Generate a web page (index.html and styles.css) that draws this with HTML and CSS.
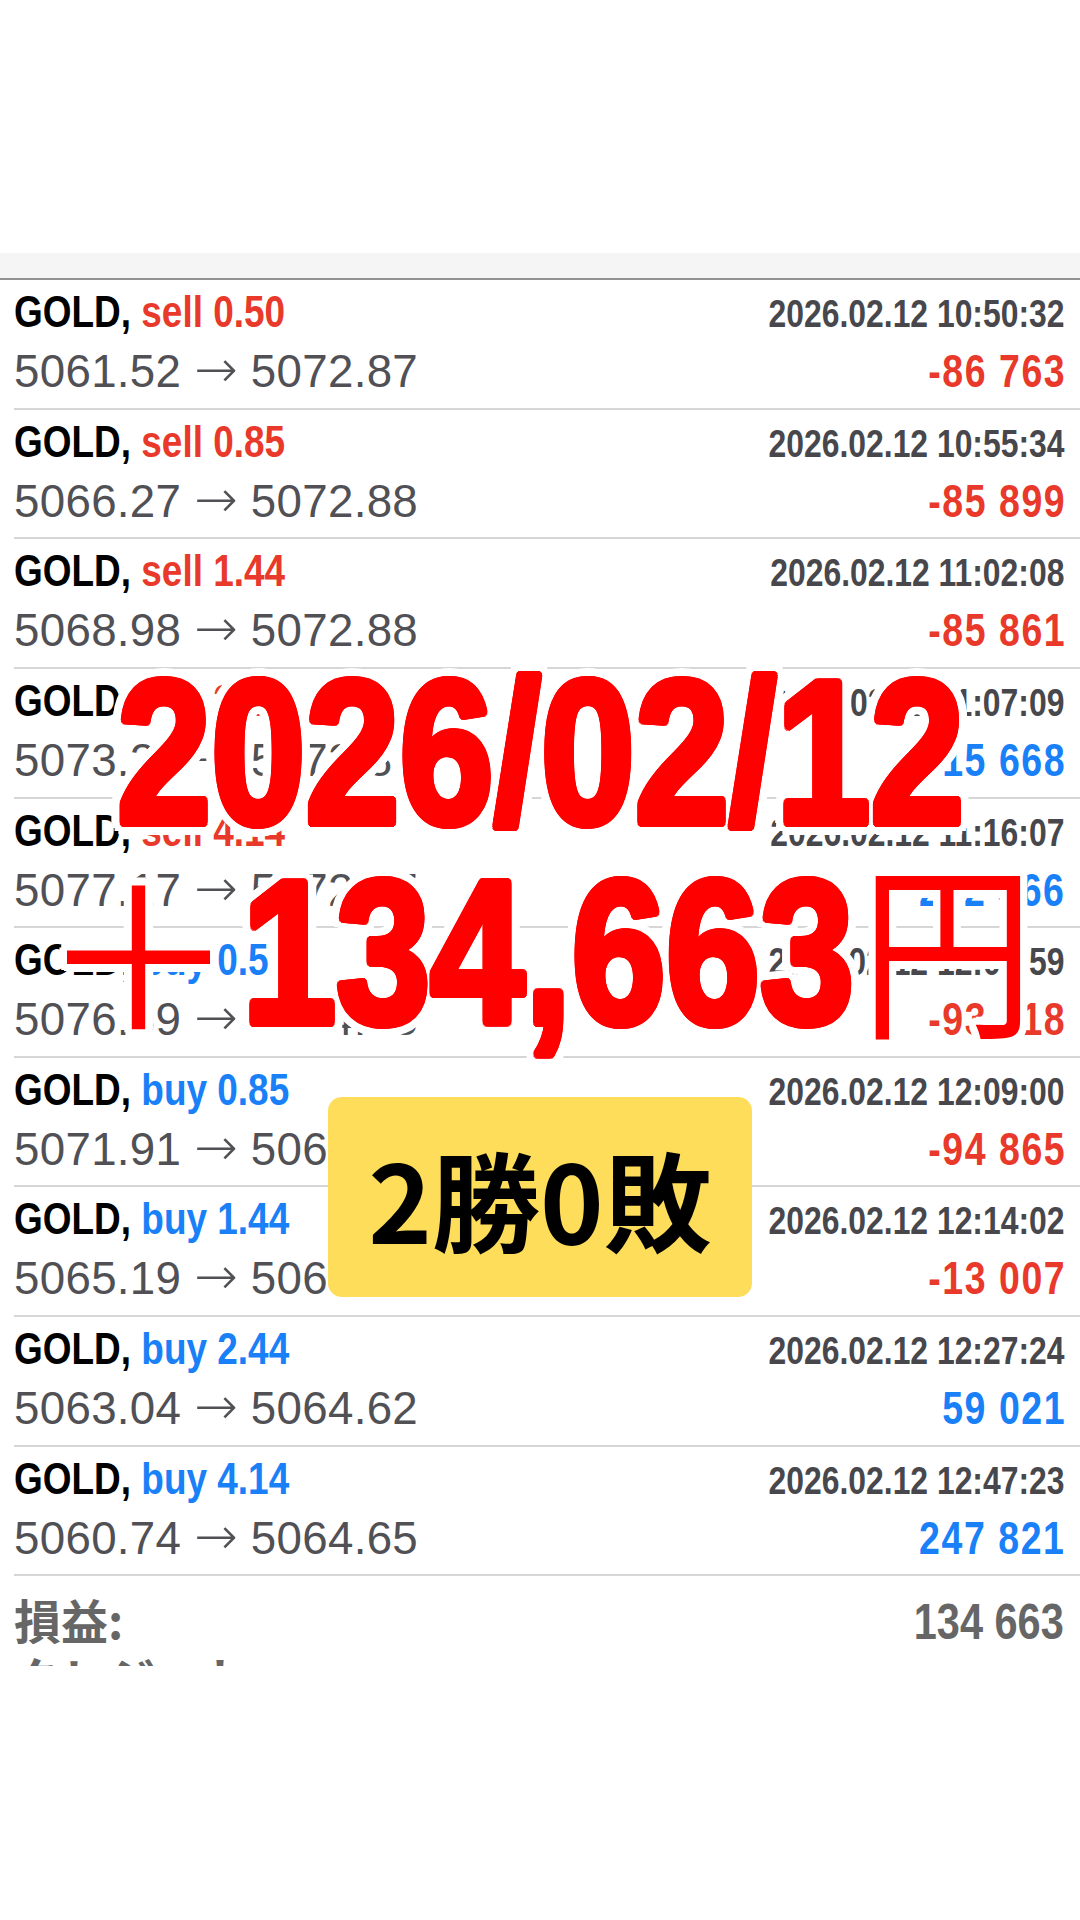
FILE: index.html
```html
<!DOCTYPE html>
<html lang="ja">
<head>
<meta charset="utf-8">
<title>GOLD 履歴</title>
<link rel="stylesheet" href="styles.css">
</head>
<body>
<div class="page">
  <div class="screen">
    <div class="gap"></div>
    <div class="band"></div>
    <ul class="deals">
      <li class="deal">
        <div class="l1"><span class="sym cond sx">GOLD, <span class="sell">sell 0.50</span></span><span class="time cond sx sx-r">2026.02.12 10:50:32</span></div>
        <div class="l2"><span class="px">5061.52 <span class="arr">→</span> 5072.87</span><span class="pl cond sx sx-r loss">-86 763</span></div>
      </li>
      <li class="deal">
        <div class="l1"><span class="sym cond sx">GOLD, <span class="sell">sell 0.85</span></span><span class="time cond sx sx-r">2026.02.12 10:55:34</span></div>
        <div class="l2"><span class="px">5066.27 <span class="arr">→</span> 5072.88</span><span class="pl cond sx sx-r loss">-85 899</span></div>
      </li>
      <li class="deal">
        <div class="l1"><span class="sym cond sx">GOLD, <span class="sell">sell 1.44</span></span><span class="time cond sx sx-r">2026.02.12 11:02:08</span></div>
        <div class="l2"><span class="px">5068.98 <span class="arr">→</span> 5072.88</span><span class="pl cond sx sx-r loss">-85 861</span></div>
      </li>
      <li class="deal">
        <div class="l1"><span class="sym cond sx">GOLD, <span class="sell">sell 2.44</span></span><span class="time cond sx sx-r">2026.02.12 11:07:09</span></div>
        <div class="l2"><span class="px">5073.29 <span class="arr">→</span> 5072.87</span><span class="pl cond sx sx-r gain">15 668</span></div>
      </li>
      <li class="deal">
        <div class="l1"><span class="sym cond sx">GOLD, <span class="sell">sell 4.14</span></span><span class="time cond sx sx-r">2026.02.12 11:16:07</span></div>
        <div class="l2"><span class="px">5077.17 <span class="arr">→</span> 5072.87</span><span class="pl cond sx sx-r gain">272 466</span></div>
      </li>
      <li class="deal">
        <div class="l1"><span class="sym cond sx">GOLD, <span class="buy">buy 0.50</span></span><span class="time cond sx sx-r">2026.02.12 12:03:59</span></div>
        <div class="l2"><span class="px">5076.39 <span class="arr">→</span> 5064.08</span><span class="pl cond sx sx-r loss">-93 918</span></div>
      </li>
      <li class="deal">
        <div class="l1"><span class="sym cond sx">GOLD, <span class="buy">buy 0.85</span></span><span class="time cond sx sx-r">2026.02.12 12:09:00</span></div>
        <div class="l2"><span class="px">5071.91 <span class="arr">→</span> 5064.61</span><span class="pl cond sx sx-r loss">-94 865</span></div>
      </li>
      <li class="deal">
        <div class="l1"><span class="sym cond sx">GOLD, <span class="buy">buy 1.44</span></span><span class="time cond sx sx-r">2026.02.12 12:14:02</span></div>
        <div class="l2"><span class="px">5065.19 <span class="arr">→</span> 5064.60</span><span class="pl cond sx sx-r loss">-13 007</span></div>
      </li>
      <li class="deal">
        <div class="l1"><span class="sym cond sx">GOLD, <span class="buy">buy 2.44</span></span><span class="time cond sx sx-r">2026.02.12 12:27:24</span></div>
        <div class="l2"><span class="px">5063.04 <span class="arr">→</span> 5064.62</span><span class="pl cond sx sx-r gain">59 021</span></div>
      </li>
      <li class="deal">
        <div class="l1"><span class="sym cond sx">GOLD, <span class="buy">buy 4.14</span></span><span class="time cond sx sx-r">2026.02.12 12:47:23</span></div>
        <div class="l2"><span class="px">5060.74 <span class="arr">→</span> 5064.65</span><span class="pl cond sx sx-r gain">247 821</span></div>
      </li>
    </ul>
    <div class="summary">
      <div class="sum-row"><span class="sum-label">損益:</span><span class="sum-val cond sx sx-r">134 663</span></div>
      <div class="sum-row next"><span class="sum-label">クレジット:</span></div>
    </div>
  </div>

  <div class="date-big cond"><span class="big-num date-num">2026/02/12</span></div>
  <div class="amount-big cond"><span class="cjk plus">＋</span><span class="big-num amt-num">134,663</span><span class="cjk yen">円</span></div>
  <div class="badge">2勝0敗</div>
</div>
</body>
</html>
```

FILE: styles.css
```css
:root {
  --red-ring: 4px 0 0 #f00, 3.7px 1.53px 0 #f00, 2.83px 2.83px 0 #f00, 1.53px 3.7px 0 #f00,
    0 4px 0 #f00, -1.53px 3.7px 0 #f00, -2.83px 2.83px 0 #f00, -3.7px 1.53px 0 #f00,
    -4px 0 0 #f00, -3.7px -1.53px 0 #f00, -2.83px -2.83px 0 #f00, -1.53px -3.7px 0 #f00,
    0 -4px 0 #f00, 1.53px -3.7px 0 #f00, 2.83px -2.83px 0 #f00, 3.7px -1.53px 0 #f00,
    2px 0 0 #f00, 0 2px 0 #f00, -2px 0 0 #f00, 0 -2px 0 #f00;
  --white-ring: 9px 0 0 #fff, 8.3px 3.06px 0 #fff, 6.4px 5.66px 0 #fff, 3.5px 7.39px 0 #fff,
    0 8px 0 #fff, -3.5px 7.39px 0 #fff, -6.4px 5.66px 0 #fff, -8.3px 3.06px 0 #fff,
    -9px 0 0 #fff, -8.3px -3.06px 0 #fff, -6.4px -5.66px 0 #fff, -3.5px -7.39px 0 #fff,
    0 -8px 0 #fff, 3.5px -7.39px 0 #fff, 6.4px -5.66px 0 #fff, 8.3px -3.06px 0 #fff,
    14px 0 0 #fff, 13px 4.59px 0 #fff, 10px 8.49px 0 #fff, 5.4px 11.09px 0 #fff,
    0 12px 0 #fff, -5.4px 11.09px 0 #fff, -10px 8.49px 0 #fff, -13px 4.59px 0 #fff,
    -14px 0 0 #fff, -13px -4.59px 0 #fff, -10px -8.49px 0 #fff, -5.4px -11.09px 0 #fff,
    0 -12px 0 #fff, 5.4px -11.09px 0 #fff, 10px -8.49px 0 #fff, 13px -4.59px 0 #fff;
  --white-thin: 4px 0 0 #fff, 2.83px 2.83px 0 #fff, 0 4px 0 #fff, -2.83px 2.83px 0 #fff,
    -4px 0 0 #fff, -2.83px -2.83px 0 #fff, 0 -4px 0 #fff, 2.83px -2.83px 0 #fff,
    8px 0 0 #fff, 7.39px 3.06px 0 #fff, 5.66px 5.66px 0 #fff, 3.06px 7.39px 0 #fff,
    0 8px 0 #fff, -3.06px 7.39px 0 #fff, -5.66px 5.66px 0 #fff, -7.39px 3.06px 0 #fff,
    -8px 0 0 #fff, -7.39px -3.06px 0 #fff, -5.66px -5.66px 0 #fff, -3.06px -7.39px 0 #fff,
    0 -8px 0 #fff, 3.06px -7.39px 0 #fff, 5.66px -5.66px 0 #fff, 7.39px -3.06px 0 #fff;
}

* { box-sizing: border-box; margin: 0; padding: 0; }

html, body { background: #fff; }

body {
  width: 1080px;
  height: 1920px;
  overflow: hidden;
  font-family: "Liberation Sans", Arial, sans-serif;
}

.page {
  position: relative;
  width: 1080px;
  height: 1920px;
  background: #fff;
  overflow: hidden;
}

.screen {
  height: 1666px;
  overflow: hidden;
}

.gap { height: 253px; }

.band {
  height: 27px;
  background: #f5f5f5;
  border-bottom: 2px solid #929292;
}

.cond {
  font-family: "Liberation Sans", Arial, sans-serif;
  font-weight: 700;
}

/* condensed look: horizontally squeezed bold face */
.sx {
  display: inline-block;
  transform: scaleX(0.83);
  transform-origin: 0 50%;
}

.sx-r { transform-origin: 100% 50%; }

.deals {
  list-style: none;
  margin-left: 14px;
}

.deal {
  height: 129.65px;
  border-bottom: 2px solid #d6d6d6;
  padding: 1px 16px 0 0;
}

.l1, .l2 {
  display: flex;
  justify-content: space-between;
  align-items: baseline;
  white-space: nowrap;
}

.l1 { height: 62px; line-height: 61px; }
.l2 { height: 58px; line-height: 57px; }

.sym { font-size: 44px; color: #000; transform: scaleX(0.84); }
.sell { color: #e8392b; }
.buy { color: #1a80f7; }

.time { font-size: 38.4px; color: #47474c; }

.px { font-size: 45.7px; color: #505055; letter-spacing: 0.3px; }

.arr {
  font-family: "DejaVu Sans", sans-serif;
  font-weight: 200;
  font-size: 52px;
  line-height: 0;
  letter-spacing: 0;
}

.pl { font-size: 45.7px; letter-spacing: 1.9px; margin-right: -1.9px; transform: scaleX(0.82); }
.loss { color: #e8392b; }
.gain { color: #1a80f7; }

.summary {
  margin-left: 14px;
  padding: 13px 16px 0 0;
}

.sum-row {
  display: flex;
  justify-content: space-between;
  align-items: baseline;
  line-height: 60px;
  white-space: nowrap;
}

.sum-row.next { margin-top: -5px; }

.sum-label {
  font-family: "Noto Sans CJK JP", sans-serif;
  font-weight: 700;
  font-size: 47px;
  color: #666;
}

.sum-val { font-size: 50px; color: #666; }

/* overlays */
.date-big,
.amount-big {
  position: absolute;
  font-size: 205px;
  line-height: 205px;
  color: #f00;
  white-space: nowrap;
  z-index: 2;
}

.date-big { left: 117px; top: 648.5px; }
.amount-big { left: 40px; top: 848.5px; }

.big-num {
  display: inline-block;
  transform: scaleX(0.826);
  transform-origin: 0 50%;
  text-shadow: var(--red-ring), var(--white-ring);
}

.date-num { margin-right: -179px; }
.amt-num { margin-left: 5px; margin-right: -129px; }

.cjk {
  font-family: "Noto Sans CJK JP", sans-serif;
  font-weight: 400;
  line-height: 0;
  text-shadow: var(--white-thin);
}

.plus { font-size: 197px; vertical-align: -8px; }

.yen {
  display: inline-block;
  font-size: 190px;
  margin-left: 6px;
  transform: scaleX(0.92);
  transform-origin: 0 50%;
}

.badge {
  position: absolute;
  left: 328px;
  top: 1097px;
  width: 424px;
  height: 200px;
  border-radius: 14px;
  background: #fedd5a;
  display: flex;
  align-items: center;
  justify-content: center;
  font-family: "Noto Sans CJK JP", sans-serif;
  font-weight: 700;
  font-size: 108px;
  line-height: 1;
  color: #000;
  z-index: 3;
}
```
